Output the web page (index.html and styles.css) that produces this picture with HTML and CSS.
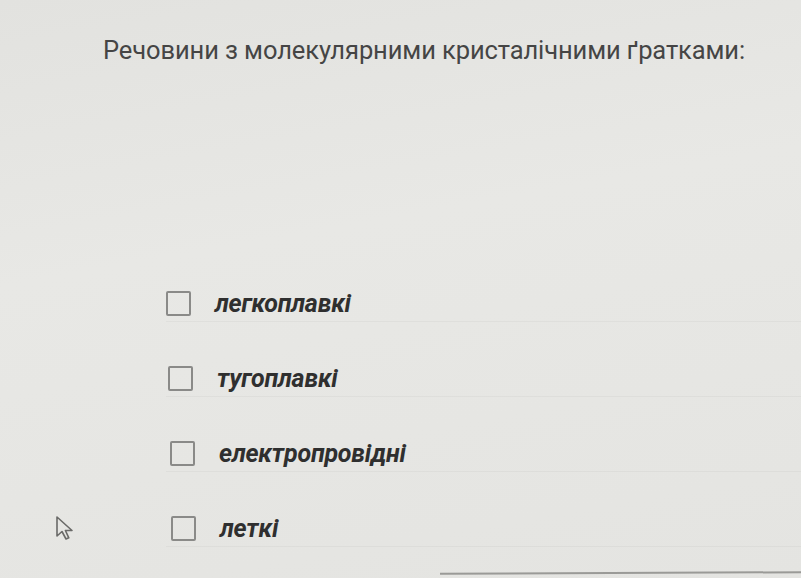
FILE: index.html
```html
<!DOCTYPE html>
<html lang="uk">
    <head>
        <meta charset="UTF-8" />
        <meta name="viewport" content="width=device-width, initial-scale=1.0" />
        <title>Питання</title>
        <link rel="stylesheet" href="styles.css">
    </head>

    <body>
        <div class="question">
            <!-- Текст питання -->
            <h1 class="question-title">Речовини з молекулярними кристалічними ґратками:</h1>

            <!-- Варіанти відповіді -->
            <div class="options">
                <label class="option">
                    <input type="checkbox" name="answer" value="1">
                    <span class="box"></span>
                    <span class="option-text">легкоплавкі</span>
                </label>
                <label class="option">
                    <input type="checkbox" name="answer" value="2">
                    <span class="box"></span>
                    <span class="option-text">тугоплавкі</span>
                </label>
                <label class="option">
                    <input type="checkbox" name="answer" value="3">
                    <span class="box"></span>
                    <span class="option-text">електропровідні</span>
                </label>
                <label class="option">
                    <input type="checkbox" name="answer" value="4">
                    <span class="box"></span>
                    <span class="option-text">леткі</span>
                </label>
            </div>
        </div>

        <!-- Курсор миші -->
        <svg class="cursor" width="24" height="28" viewBox="0 0 24 28">
            <path d="M3 2 L3 21 L8 16.5 L12 24 L14.8 22.8 L11.4 15.5 L18 15.5 Z" fill="none" stroke="#6a6a68" stroke-width="1.6" stroke-linejoin="round"/>
        </svg>

        <div class="bottom-line"></div>
    </body>
</html>
```

FILE: styles.css
```css
* {
    margin: 0;
    padding: 0;
    box-sizing: border-box;
}

body {
    width: 801px;
    height: 578px;
    overflow: hidden;
    position: relative;
    font-family: Roboto, "Liberation Sans", sans-serif;
    background: linear-gradient(170deg, #e2e2df 0%, #e8e8e5 40%, #e4e4e1 100%);
}

/* Блок питання */
.question {
    padding: 32px 0 0 103px;
}

.question-title {
    font-size: 25.5px;
    font-weight: 400;
    color: #454545;
    letter-spacing: -0.1px;
    line-height: 36px;
}

/* Варіанти */
.options {
    display: flex;
    flex-direction: column;
    gap: 39px;
    margin: 218px 0 0 63px;
}

.option {
    display: flex;
    align-items: center;
    gap: 24px;
    height: 36px;
    border-bottom: 1px solid rgba(0, 0, 0, 0.03);
}

/* легкий зсув рядків, як на фото */
.option:nth-child(2) { padding-left: 2px; }
.option:nth-child(3) { padding-left: 4px; }
.option:nth-child(4) { padding-left: 5px; }

.option input {
    display: none;
}

.box {
    width: 25px;
    height: 25px;
    border: 2px solid #8a8a88;
    border-radius: 2px;
}

.option-text {
    font-size: 25px;
    font-weight: 700;
    font-style: italic;
    color: #2f2f2f;
    letter-spacing: -0.2px;
}

.cursor {
    position: absolute;
    left: 54px;
    top: 515px;
}

.bottom-line {
    position: absolute;
    left: 440px;
    right: 0;
    top: 572px;
    height: 2px;
    background: #9a9a97;
    transform: rotate(-0.25deg);
}
```
